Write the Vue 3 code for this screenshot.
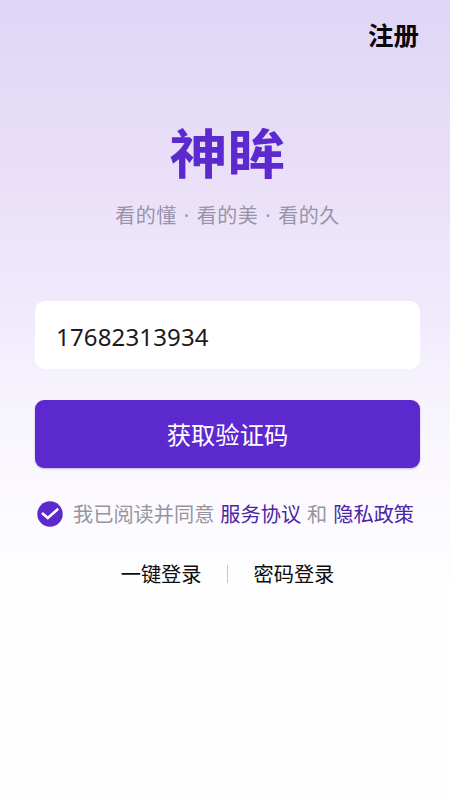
<script setup>
import { ref } from 'vue'

const phone = ref('17682313934')
const agreed = ref(true)
</script>

<template>
  <main class="page">
    <header class="top"><a class="register">注册</a></header>
    <section class="brand">
      <h1 class="logo">神眸</h1>
      <p class="slogan">看的懂 · 看的美 · 看的久</p>
    </section>
    <form class="form" @submit.prevent>
      <input v-model="phone" class="phone" type="tel" aria-label="手机号" />
      <button class="submit" type="submit">获取验证码</button>
    </form>
    <div class="agreement">
      <button class="check" type="button" aria-label="同意协议" @click="agreed = !agreed">
        <svg viewBox="0 0 26 26" width="26" height="26">
          <circle cx="13" cy="13" r="12.7" fill="#5c29cf" />
          <path v-if="agreed" d="M5 12 L10.8 17 L21.2 7.8" fill="none" stroke="#fff" stroke-width="2.6" />
        </svg>
      </button>
      <span class="muted">我已阅读并同意</span>
      <a class="link">服务协议</a>
      <span class="muted">和</span>
      <a class="link">隐私政策</a>
    </div>
    <nav class="modes">
      <a>一键登录</a>
      <span class="divider"></span>
      <a>密码登录</a>
    </nav>
  </main>
</template>

<style>
body {
  background: #fff;
}
</style>

<style scoped>
.page {
  box-sizing: border-box;
  height: 800px;
  padding: 0 30px 0 35px;
  overflow: hidden;
  font-family: "Noto Sans CJK SC", sans-serif;
  background: linear-gradient(#dfd6f8 0, #e4dbf7 90px, #e9def8 160px, #ece4fa 230px, #f1eafc 320px, #f6f3fd 390px, #fbf9fe 490px, #fefefe 590px, #fefefe 100%);
}
.top {
  display: flex;
  justify-content: flex-end;
  padding: 14px 1px 0 0;
}
.register {
  font-size: 25.5px;
  font-weight: 700;
  line-height: 40px;
  color: #08060c;
}
.brand {
  display: flex;
  flex-direction: column;
  align-items: center;
  padding-top: 65px;
}
.logo {
  margin: 0;
  font-size: 58px;
  font-weight: 700;
  line-height: 64px;
  color: #5c29cf;
  transform: scaleY(0.93);
}
.slogan {
  margin: 18px 0 0;
  font-family: "Noto Sans", "Noto Sans CJK SC", sans-serif;
  font-size: 20px;
  line-height: 30px;
  letter-spacing: 0.45px;
  word-spacing: 1.5px;
  color: #9893a9;
  white-space: nowrap;
}
.form {
  display: flex;
  flex-direction: column;
  gap: 31px;
  padding-top: 70px;
}
.phone {
  box-sizing: border-box;
  width: 385px;
  height: 68px;
  padding: 2px 21px 0;
  border: 0;
  border-radius: 10px;
  outline: 0;
  background: #fff;
  font-family: "Noto Sans", sans-serif;
  font-size: 24px;
  letter-spacing: 0.15px;
  color: #1c1a20;
}
.submit {
  width: 385px;
  height: 68px;
  padding: 0 0 2px;
  border: 0;
  border-radius: 9px;
  background: #5c29cf;
  box-shadow: 0 1px 2px rgba(70, 30, 150, 0.3);
  font-family: inherit;
  font-size: 24.3px;
  color: #fff;
}
.agreement {
  display: flex;
  align-items: center;
  height: 30px;
  margin-top: 31px;
  padding-left: 2px;
  font-size: 20.2px;
  line-height: 30px;
  white-space: nowrap;
}
.check {
  display: flex;
  margin-right: 10px;
  padding: 0;
  border: 0;
  background: none;
}
.muted {
  color: #97949e;
}
.link {
  margin: 0 6px;
  color: #4b25a8;
}
.modes {
  display: flex;
  align-items: center;
  justify-content: center;
  gap: 25.5px;
  margin-top: 30px;
  font-size: 20.2px;
  line-height: 30px;
  color: #0c0c0c;
}
.divider {
  width: 1px;
  height: 18px;
  background: #c9c8cc;
}
</style>
